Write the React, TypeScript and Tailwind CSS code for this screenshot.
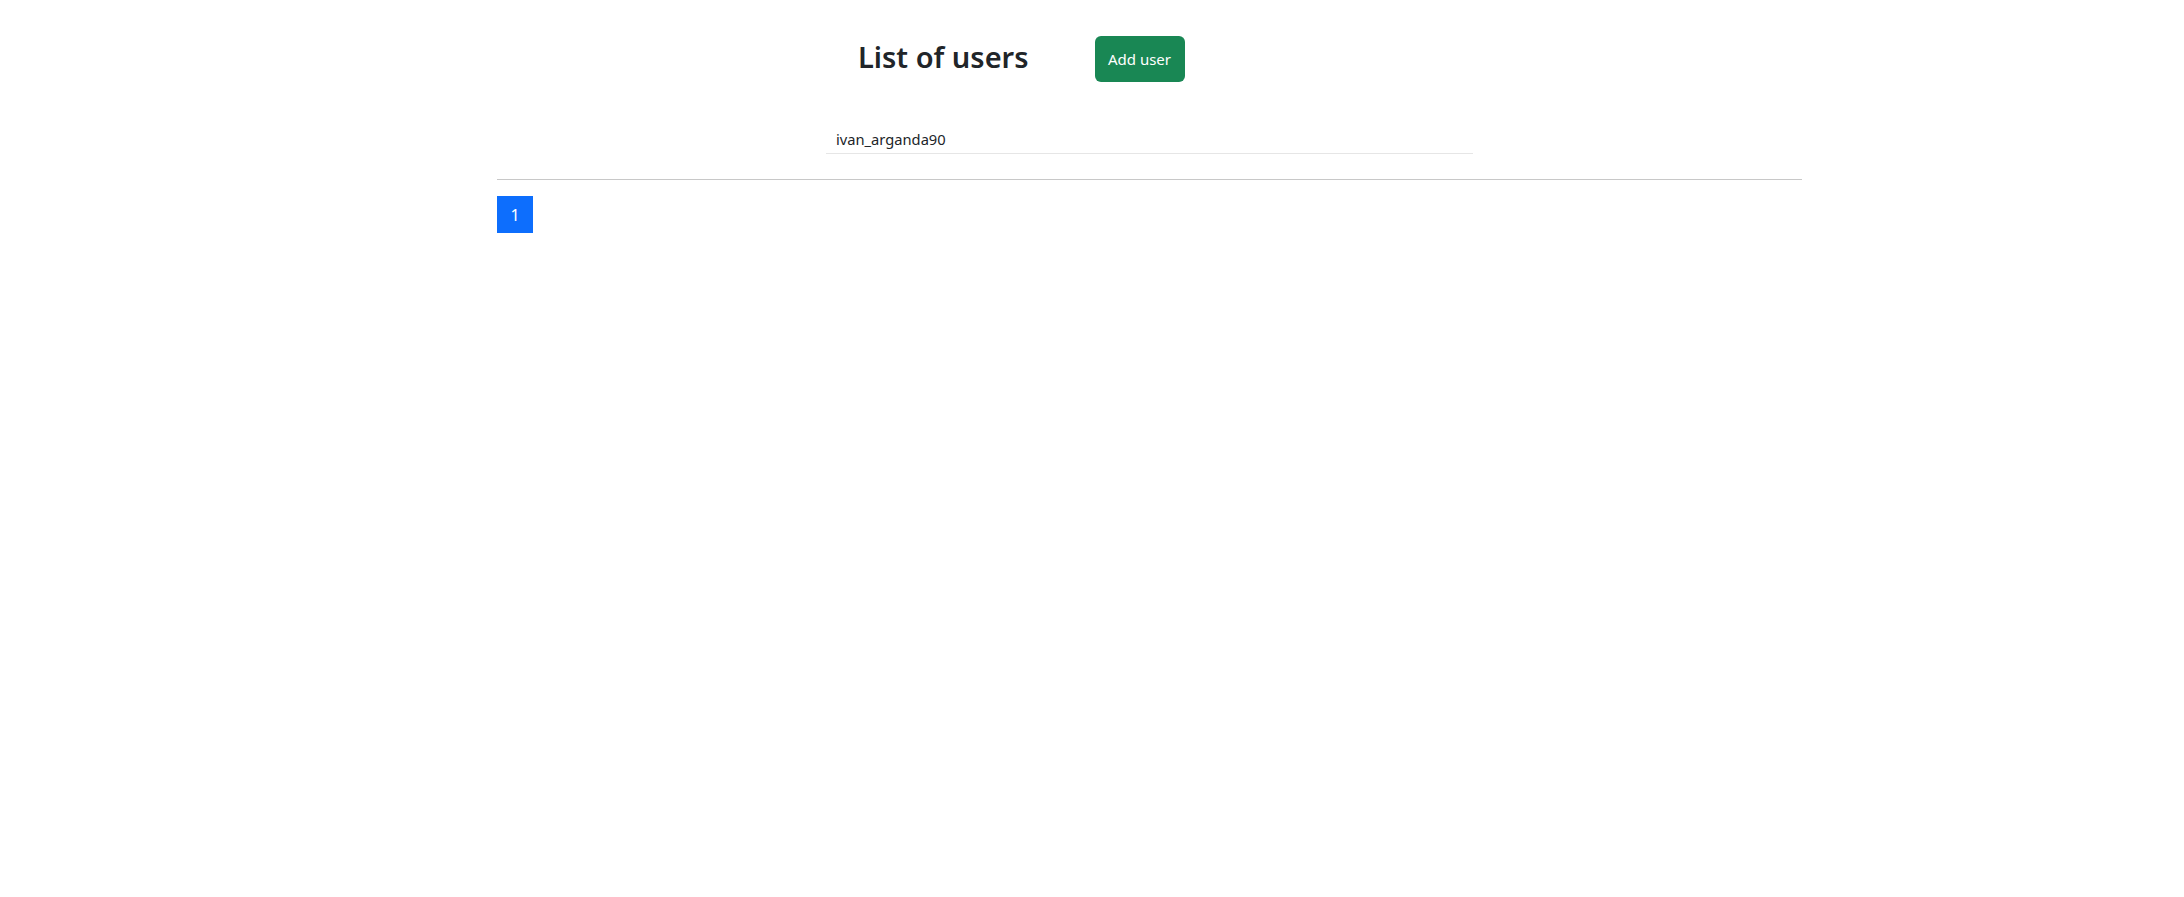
import React from 'react';

interface User {
  id: number;
  username: string;
}

const users: User[] = [{ id: 1, username: 'ivan_arganda90' }];

// --- Header with title and add button ---
const Header = () => (
  <div className="flex items-center pl-[361px] pt-[36px] h-[82px]">
    <h2 className="text-[29px] font-semibold text-[#212529] leading-none -mt-[6px]">List of users</h2>
    <button className="ml-[66px] w-[90px] h-[46px] rounded-md bg-[#198754] text-white text-[15px] leading-none">
      Add user
    </button>
  </div>
);

// --- User list ---
const UserList = ({ items }: { items: User[] }) => (
  <ul className="w-[647px] mx-auto mt-[32px]">
    {items.map((u) => (
      <li key={u.id} className="h-[40px] flex items-end pb-[3px] pl-[10px] border-b border-[#e6e6e6] text-[14.7px] text-[#212529]">
        {u.username}
      </li>
    ))}
  </ul>
);

export default function App() {
  return (
    <div className="min-h-screen bg-white" style={{ fontFamily: '"Noto Sans", "Open Sans", sans-serif' }}>
      <div className="ml-[497px] w-[1305px]">
        <Header />
        <UserList items={users} />
        <hr className="mt-[25px] border-0 border-t border-[#c8c8c8]" />
        <div className="flex mt-[16px]">
          <button className="w-[36px] h-[37px] bg-[#0d6efd] text-white text-[16px] leading-none">1</button>
        </div>
      </div>
    </div>
  );
}
